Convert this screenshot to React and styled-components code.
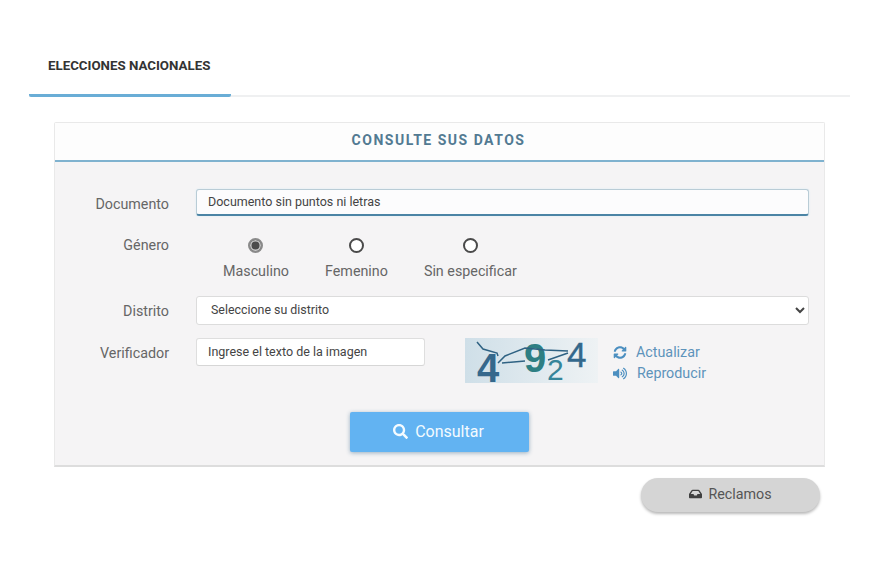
import React from 'react';
import styled, { createGlobalStyle } from 'styled-components';
import { FaSyncAlt, FaVolumeUp, FaSearch, FaInbox } from 'react-icons/fa';

const Global = createGlobalStyle`
  html, body { margin: 0; padding: 0; background: #fff; }
  body { font-family: Roboto, "Liberation Sans", sans-serif; color: #5f5f5f; }
  * { box-sizing: border-box; }
`;

const Page = styled.div`
  width: 870px;
  height: 580px;
  padding: 37px 20px 0 29px;
  overflow: hidden;
`;

const Tabs = styled.div`
  display: flex;
  height: 60px;
  border-bottom: 2px solid #eff0f1;
`;

const Tab = styled.div`
  width: 202px;
  height: 60px;
  padding: 0 0 0 19px;
  display: flex;
  align-items: center;
  font-size: 13.3px;
  font-weight: 700;
  color: #333;
  border-bottom: 3px solid #69add6;
  border-radius: 0 0 2px 2px;
`;

const Panel = styled.section`
  width: 771px;
  height: 345px;
  margin: 25px 0 0 25px;
  background: #f5f4f5;
  border: 1px solid #e9e9e9;
  border-bottom: 2px solid #dddddd;
  border-radius: 2px 2px 0 0;
  display: flex;
  flex-direction: column;
`;

const PanelHead = styled.h2`
  margin: 0;
  height: 39px;
  flex: none;
  background: #fdfdfd;
  border-bottom: 2px solid #7fb2cf;
  display: flex;
  align-items: center;
  justify-content: center;
  padding: 0 2px 3px 0;
  font-size: 14px;
  font-weight: 700;
  letter-spacing: 1.5px;
  color: #527a92;
`;

const Form = styled.div`
  display: flex;
  flex-direction: column;
  padding: 27px 15px 0 0;
`;

const Row = styled.div`
  display: flex;
  align-items: ${p => p.$align || 'center'};
  margin-top: ${p => p.$top || 0}px;
`;

const Label = styled.label`
  width: 115px;
  margin-right: 26px;
  text-align: right;
  font-size: 14.3px;
  color: #666;
  flex: none;
  padding: ${p => p.$pt || 0}px 1px 0 0;
`;

const TextInput = styled.div`
  width: ${p => p.$w};
  height: ${p => p.$h}px;
  background: ${p => p.$focus ? '#fcfcfd' : '#fff'};
  border: 1px solid ${p => p.$focus ? '#b9ccd6' : '#dedede'};
  border-bottom: ${p => p.$focus ? '2px solid #4b84a5' : '1px solid #d6d6d6'};
  border-radius: 3px;
  box-shadow: ${p => p.$focus ? '0 0 2px #d8ecf6' : 'none'};
  padding: 0 0 2px ${p => p.$pl}px;
  display: flex;
  align-items: center;
  font-size: 12.5px;
  color: #444;
`;

const Select = styled.select`
  width: 613px;
  height: 29px;
  background-color: #fff;
  border: 1px solid #dcdcdc;
  border-radius: 3px;
  padding: 0 0 2px 10px;
  font-family: inherit;
  font-size: 12.4px;
  color: #444;
`;

const Radios = styled.div`
  display: flex;
  gap: 36px;
  margin-left: 27px;
  padding-top: 1px;
`;

const RadioItem = styled.div`
  display: flex;
  flex-direction: column;
  align-items: center;
  gap: 10px;
  font-size: 14.3px;
  color: #666;
`;

const Radio = styled.span`
  display: block;
  width: 15px;
  height: 15px;
  margin-left: ${p => p.$on ? -1 : 0}px;
  border-radius: 50%;
  border: 2px solid ${p => p.$on ? '#8a8a8a' : '#4a4a4a'};
  background: ${p => p.$on ? '#4c4c4c' : '#fff'};
  box-shadow: ${p => p.$on ? 'inset 0 0 0 1.5px #c9c9c9' : 'none'};
`;

const Captcha = styled.svg`
  display: block;
  width: 133px;
  height: 45px;
  margin-left: 40px;
  flex: none;
`;

const Links = styled.div`
  display: flex;
  flex-direction: column;
  gap: 4px;
  margin-left: 15px;
  margin-top: 6px;
`;

const LinkItem = styled.a`
  display: flex;
  align-items: center;
  gap: ${p => p.$gap}px;
  font-size: 14.3px;
  line-height: 17px;
  color: #5d93bb;
  svg { width: 14px; height: 13px; color: #4c8fc0; flex: none; }
`;

const Actions = styled.div`
  display: flex;
  justify-content: center;
  margin: 29px 0 0 15px;
`;

const Primary = styled.button`
  width: 179px;
  height: 40px;
  background: #62b3f2;
  border: 0;
  border-radius: 2px;
  padding: 0 2px 2px 0;
  box-shadow: 0 1px 4px rgba(40, 90, 130, .45);
  color: #f4fbff;
  font-family: inherit;
  font-size: 16px;
  display: flex;
  align-items: center;
  justify-content: center;
  gap: 7px;
  svg { width: 15px; height: 15px; }
`;

const Footer = styled.div`
  display: flex;
  justify-content: flex-end;
  width: 791px;
  margin-top: 11px;
`;

const Pill = styled.button`
  width: 179px;
  height: 34px;
  background: #d5d5d5;
  border: 0;
  border-radius: 17px;
  box-shadow: 0 2px 3px rgba(0, 0, 0, .28);
  color: #555;
  font-family: inherit;
  font-size: 14.3px;
  display: flex;
  align-items: center;
  justify-content: center;
  gap: 6px;
  padding: 0 0 2px 0;
  svg { width: 13px; height: 12px; color: #3f3f3f; }
`;

export default function App() {
  return (
    <Page>
      <Global />
      <Tabs><Tab>ELECCIONES NACIONALES</Tab></Tabs>
      <Panel>
        <PanelHead>CONSULTE SUS DATOS</PanelHead>
        <Form>
          <Row>
            <Label $pt={2}>Documento</Label>
            <TextInput $focus $w="613px" $h={27} $pl={11}>Documento sin puntos ni letras</TextInput>
          </Row>
          <Row $align="flex-start" $top={21}>
            <Label>Género</Label>
            <Radios>
              <RadioItem><Radio $on /><span>Masculino</span></RadioItem>
              <RadioItem><Radio /><span>Femenino</span></RadioItem>
              <RadioItem><Radio /><span>Sin especificar</span></RadioItem>
            </Radios>
          </Row>
          <Row $top={17}>
            <Label>Distrito</Label>
            <Select defaultValue="x"><option value="x">Seleccione su distrito</option></Select>
          </Row>
          <Row $align="flex-start" $top={13}>
            <Label $pt={7}>Verificador</Label>
            <TextInput $w="229px" $h={28} $pl={11}>Ingrese el texto de la imagen</TextInput>
            <Captcha viewBox="0 0 133 45">
              <defs>
                <linearGradient id="capbg" x1="0" x2="1" y1="0" y2="0">
                  <stop offset="0" stopColor="#cfdfe8" />
                  <stop offset="1" stopColor="#eef2f4" />
                </linearGradient>
              </defs>
              <rect width="133" height="45" fill="url(#capbg)" />
              <g fontFamily="'Liberation Sans', sans-serif">
                <text x="12" y="44" fontSize="40" fontWeight="700" fill="#35688c">4</text>
                <text x="59" y="34" fontSize="40" fontWeight="700" fill="#2e7f83">9</text>
                <text x="82" y="42" fontSize="30" fill="#35859a">2</text>
                <text x="102" y="29" fontSize="35" stroke="#33688c" strokeWidth=".4" fill="#33688c">4</text>
              </g>
              <path d="M12 4 L18 11 L32 15 L33 18 M33 25 L40 18 L60 10 L80 12 L103 13 M37 25 L60 23 M83 22 L103 15" stroke="#2f6283" strokeWidth="1.5" fill="none" />
            </Captcha>
            <Links>
              <LinkItem $gap={9}><FaSyncAlt />Actualizar</LinkItem>
              <LinkItem $gap={10}><FaVolumeUp />Reproducir</LinkItem>
            </Links>
          </Row>
          <Actions>
            <Primary><FaSearch />Consultar</Primary>
          </Actions>
        </Form>
      </Panel>
      <Footer>
        <Pill><FaInbox />Reclamos</Pill>
      </Footer>
    </Page>
  );
}
